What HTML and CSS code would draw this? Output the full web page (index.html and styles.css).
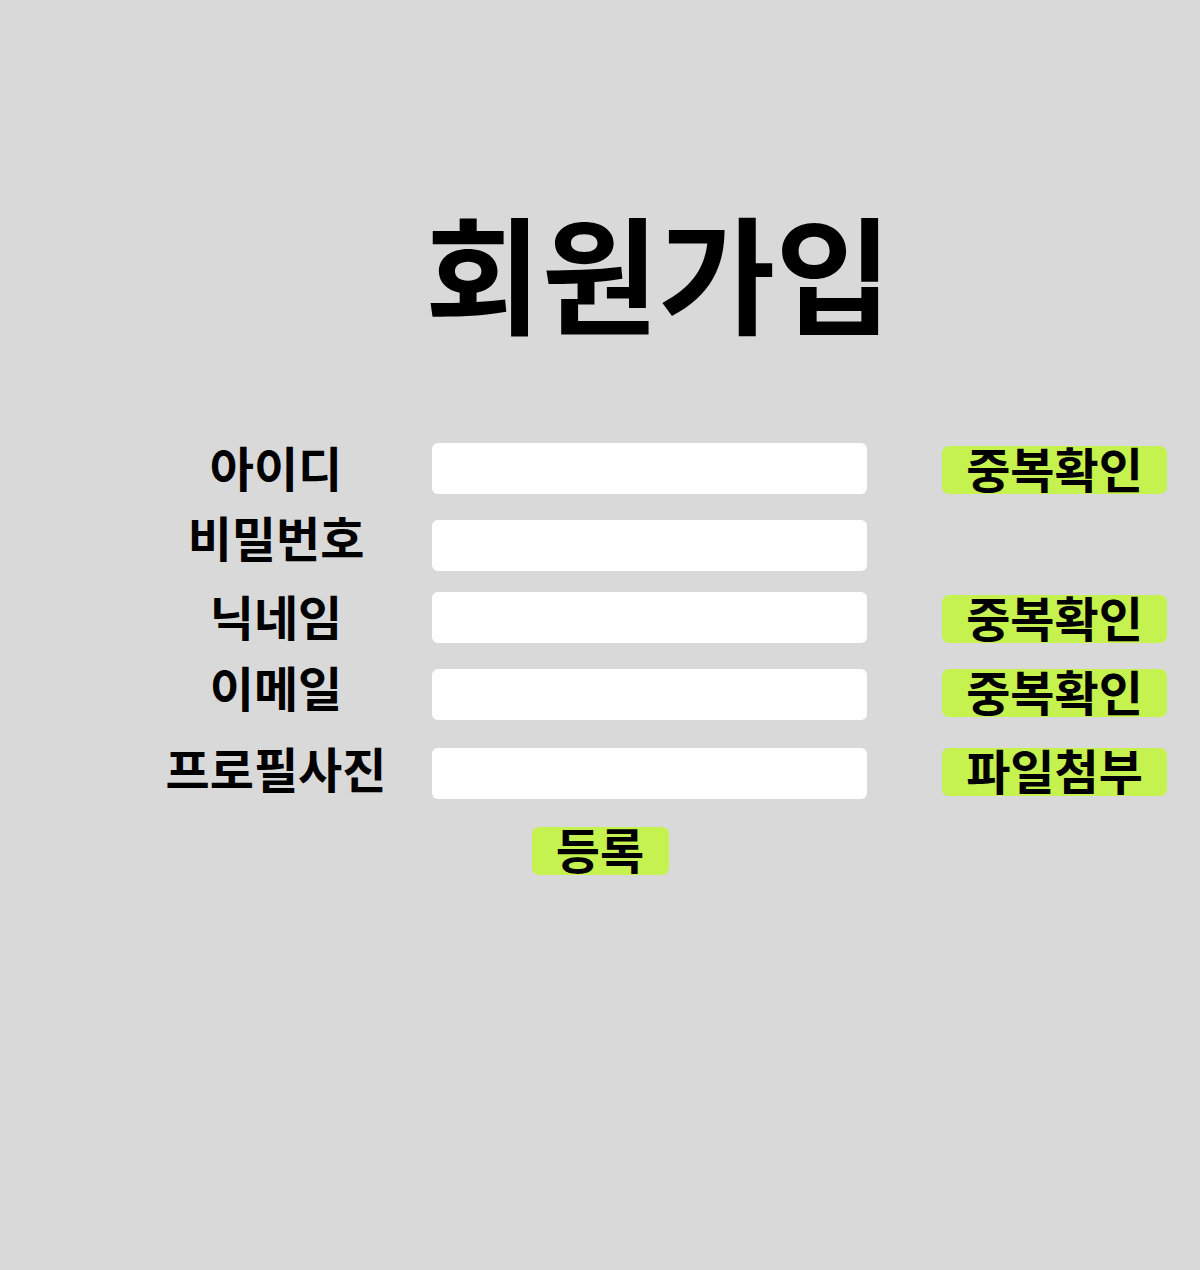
FILE: index.html
```html
<!DOCTYPE html>
<html lang="ko">
<head>
<meta charset="utf-8">
<link rel="stylesheet" href="styles.css">
<title>회원가입</title>
</head>
<body>
<div class="page">
  <div class="form">
    <h1 class="title">회원가입</h1>
    <div class="row row-1">
      <label class="label">아이디</label>
      <input class="field" type="text">
      <button class="btn btn-bottom" type="button">중복확인</button>
    </div>
    <div class="row row-2">
      <label class="label label-high">비밀번호</label>
      <input class="field" type="password">
    </div>
    <div class="row row-3">
      <label class="label">닉네임</label>
      <input class="field" type="text">
      <button class="btn btn-bottom" type="button">중복확인</button>
    </div>
    <div class="row row-4">
      <label class="label label-high2">이메일</label>
      <input class="field" type="text">
      <button class="btn btn-top" type="button">중복확인</button>
    </div>
    <div class="row row-5">
      <label class="label label-mid">프로필사진</label>
      <input class="field" type="text">
      <button class="btn btn-top" type="button">파일첨부</button>
    </div>
  </div>
  <div class="submit-wrap">
    <button class="btn submit" type="submit">등록</button>
  </div>
</div>
</body>
</html>
```

FILE: styles.css
```css
html, body {
  margin: 0;
  padding: 0;
}
body {
  background: #d9d9d9;
  font-family: "Noto Sans CJK KR", "Noto Sans", sans-serif;
  color: #000;
  width: 1200px;
  height: 1270px;
  overflow: hidden;
}
.page {
  padding-top: 207px;
}
.form {
  margin-left: 150px;
  width: 1017px;
}
.title {
  margin: 0 0 109px 0;
  font-size: 127px;
  font-weight: 700;
  line-height: 1;
  text-align: center;
  padding-top: 0;
}
.row {
  display: flex;
  align-items: stretch;
  height: 51px;
}
.row-2 { margin-top: 26px; }
.row-3 { margin-top: 21px; }
.row-4 { margin-top: 26px; }
.row-5 { margin-top: 28px; }
.label {
  width: 252px;
  margin-right: 30px;
  font-size: 48px;
  font-weight: 700;
  line-height: 46px;
  text-align: center;
  white-space: nowrap;
}
.label-high { line-height: 33px; }
.label-high2 { line-height: 35px; }
.label-mid { line-height: 39px; }
.field {
  width: 435px;
  height: 51px;
  box-sizing: border-box;
  border: none;
  border-radius: 6px;
  background: #fff;
  padding: 0 12px;
  margin: 0;
  outline: none;
}
.btn {
  background: #c5f24f;
  border: none;
  border-radius: 7px;
  font-family: "Noto Sans CJK KR", "Noto Sans", sans-serif;
  font-size: 48px;
  font-weight: 700;
  color: #000;
  padding: 0 0 6px 0;
  margin: 0;
  height: 48px;
  box-sizing: border-box;
  line-height: 42px;
  text-align: center;
}
.row .btn {
  width: 225px;
  margin-left: 75px;
}
.btn-bottom { align-self: flex-end; }
.btn-top { align-self: flex-start; }
.submit-wrap {
  display: flex;
  justify-content: center;
  margin-top: 28px;
}
.submit {
  width: 137px;
}
```
